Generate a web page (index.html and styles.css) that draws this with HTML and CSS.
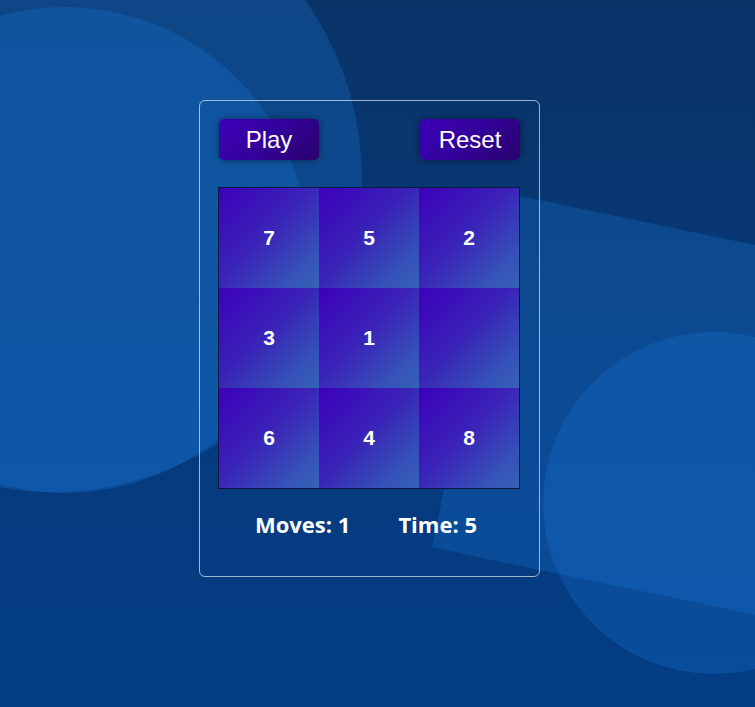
FILE: index.html
```html
<!DOCTYPE html>
<html lang="en">
<head>
<meta charset="utf-8">
<title>Sliding Puzzle</title>
<link rel="stylesheet" href="styles.css">
</head>
<body>
<svg class="backdrop" viewBox="0 0 755 707" width="755" height="707" aria-hidden="true">
  <ellipse class="blob" cx="52" cy="180" rx="310" ry="312"/>
  <circle class="blob" cx="65" cy="250" r="243"/>
  <rect class="blob" x="0" y="0" width="420" height="362" transform="translate(506 193) rotate(11.8)"/>
  <circle class="blob" cx="714" cy="503" r="171"/>
</svg>
<main class="card">
  <div class="controls">
    <button class="btn">Play</button>
    <button class="btn">Reset</button>
  </div>
  <div class="board">
    <div class="tile">7</div>
    <div class="tile">5</div>
    <div class="tile">2</div>
    <div class="tile">3</div>
    <div class="tile">1</div>
    <div class="tile"></div>
    <div class="tile">6</div>
    <div class="tile">4</div>
    <div class="tile">8</div>
  </div>
  <div class="stats">
    <span class="stat">Moves: 1</span>
    <span class="stat">Time: 5</span>
  </div>
</main>
</body>
</html>
```
FILE: styles.css
```css
html, body {
  margin: 0;
  padding: 0;
}
body {
  width: 755px;
  height: 707px;
  overflow: hidden;
  position: relative;
  background: linear-gradient(180deg, #0a3468 0%, #063a7c 60%, #043d85 100%);
  font-family: "Liberation Sans", Arial, sans-serif;
  display: flex;
  justify-content: center;
  align-items: flex-start;
  padding-top: 100px;
  box-sizing: border-box;
}
.backdrop {
  position: absolute;
  left: 0;
  top: 0;
  z-index: 0;
}
.blob {
  fill: rgba(25, 120, 215, 0.28);
}
.card {
  position: relative;
  z-index: 1;
  width: 341px;
  height: 477px;
  box-sizing: border-box;
  margin-right: 16px;
  border: 1px solid rgba(225, 232, 245, 0.7);
  border-radius: 6px;
  padding: 18px 19px 0 18px;
  display: flex;
  flex-direction: column;
}
.controls {
  display: flex;
  justify-content: space-between;
  padding-left: 1px;
}
.btn {
  width: 100px;
  height: 41px;
  border: none;
  border-radius: 5px;
  background: linear-gradient(135deg, #3c00b8 0%, #33029a 50%, #29016c 100%);
  box-shadow: 0 0 7px rgba(0, 0, 0, 0.45);
  color: #ffffff;
  font-family: "Liberation Sans", Arial, sans-serif;
  font-size: 24px;
  padding: 0;
}
.board {
  margin-top: 27px;
  width: 302px;
  height: 302px;
  box-sizing: border-box;
  border: 1px solid #0b1840;
  display: grid;
  grid-template-columns: repeat(3, 100px);
  grid-template-rows: repeat(3, 100px);
}
.tile {
  display: flex;
  align-items: center;
  justify-content: center;
  background: linear-gradient(135deg, #3d00ba 0%, #3a22b8 45%, #3650b7 80%, #3464b6 100%);
  color: #ffffff;
  font-family: "Liberation Sans", Arial, sans-serif;
  font-weight: bold;
  font-size: 21px;
}
.stats {
  margin-top: 21px;
  display: flex;
  justify-content: center;
  gap: 48px;
  padding-right: 6px;
}
.stat {
  color: #ffffff;
  font-family: "Open Sans", "Noto Sans", sans-serif;
  font-weight: bold;
  font-size: 22px;
  line-height: 28px;
}
```
